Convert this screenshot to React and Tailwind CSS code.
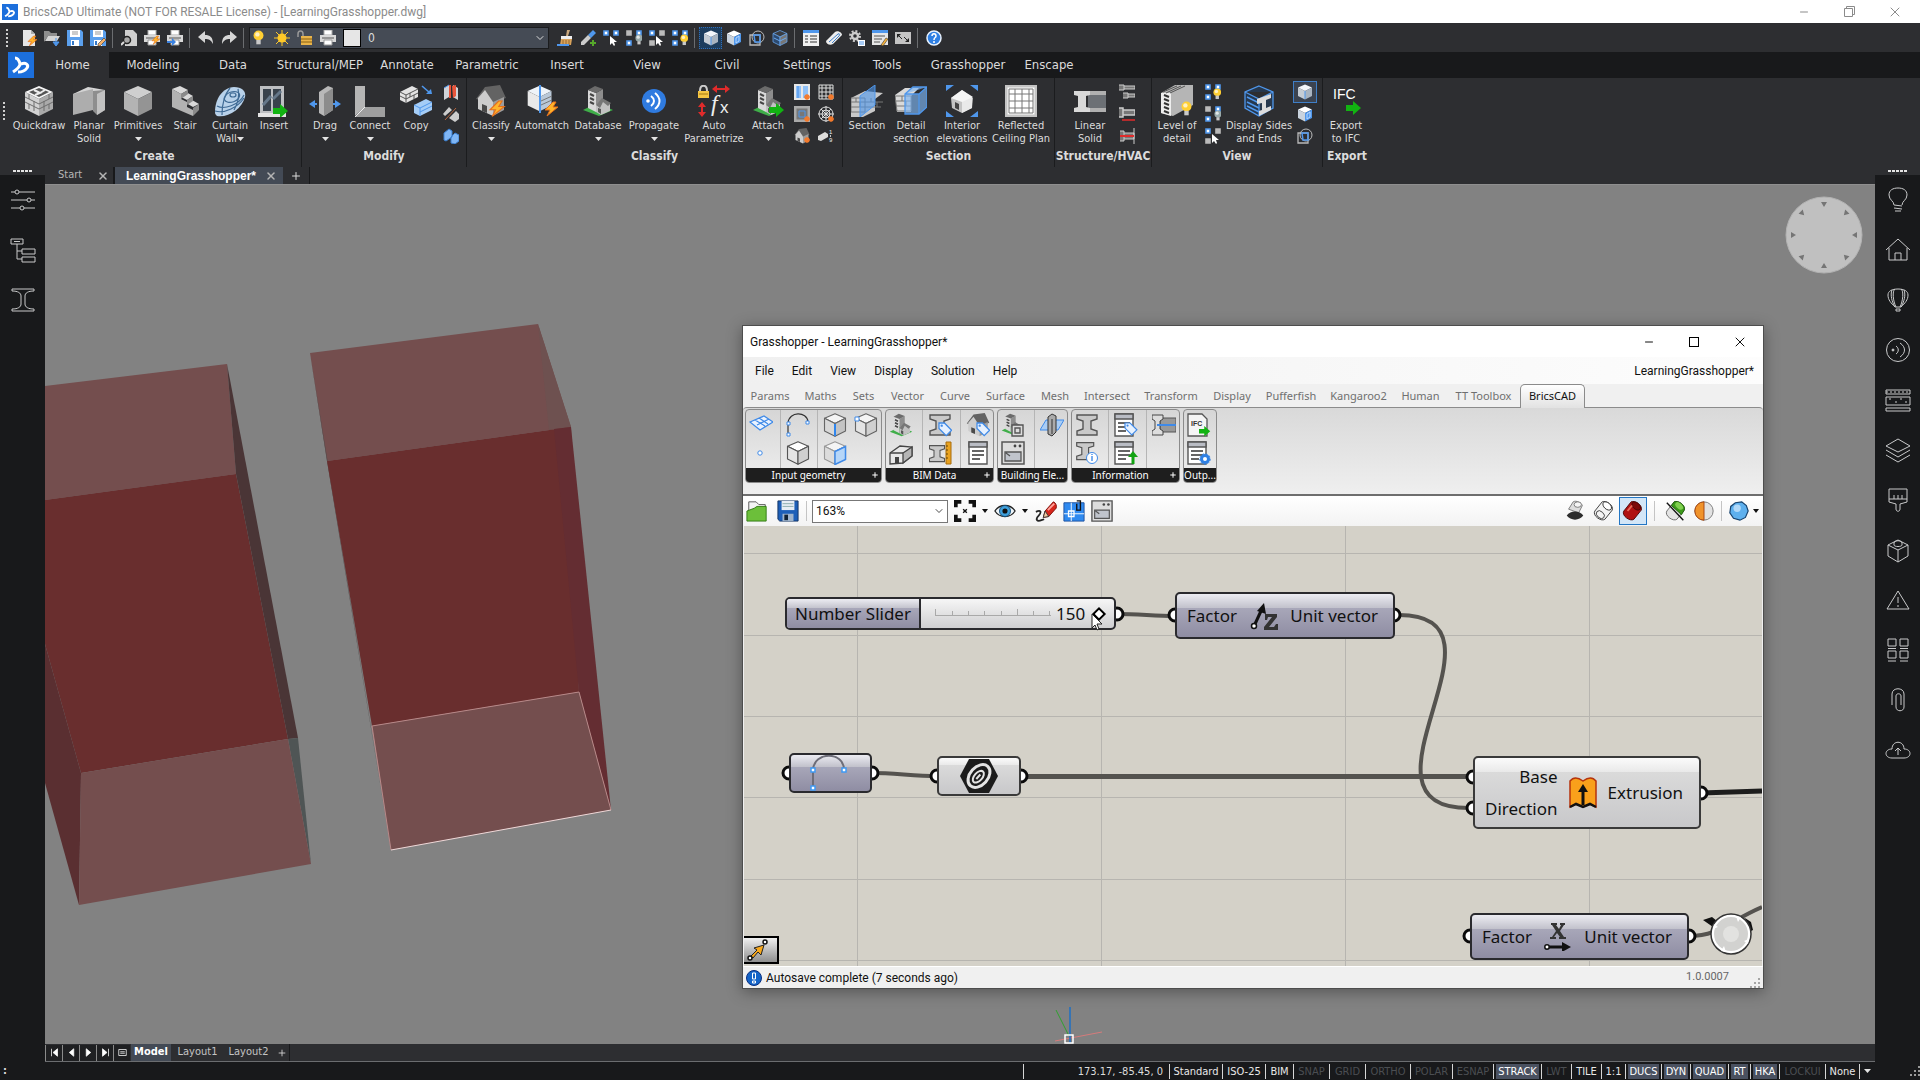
import { useState } from "react";
import { ChevronDown, X, Minus, Plus } from "lucide-react";

/* ---------- shared drawing parts ---------- */

const Svg = ({ box = 32, size = "size-8", children }) => (
  <svg
    viewBox={`0 0 ${box} ${box}`}
    className={`${size} shrink-0`}
    fill="none"
    aria-hidden="true"
  >
    {children}
  </svg>
);

const Arrow = ({ t }) => (
  <path transform={t} d="M0 4h7V0l8 7-8 7v-4H0z" fill="#12b312" />
);

const Bolt = ({ t }) => (
  <path transform={t} d="M8 0L0 8h5L2 14 13 5H8l3-5z" fill="#ffb52b" stroke="#e8701a" />
);

const Bulb = ({ t, c = "#ffcf33" }) => (
  <g transform={t}>
    <circle cx="5" cy="5" r="4.5" fill={c} />
    <circle cx="4" cy="4" r="2" fill="#fff" opacity=".7" />
    <path d="M3 9h4v4H3z" fill="#c9c9c9" />
  </g>
);

const Spark = ({ t }) => (
  <path
    transform={t}
    d="M3 0v6M0 3h6M1 1l4 4M5 1L1 5"
    stroke="#f47a2c"
    strokeWidth="1.4"
  />
);

const Cube = ({ t, top = "#cfcfcf", left = "#b3b3b3", right = "#949494", line }) => (
  <g transform={t} stroke={line} strokeWidth={line ? 1.5 : 0} strokeLinejoin="round">
    <path d="M16 1l14 6-14 7L2 7z" fill={top} />
    <path d="M2 7l14 7v17L2 24z" fill={left} />
    <path d="M30 7l-14 7v17l14-7z" fill={right} />
  </g>
);

const Building = ({ t }) => (
  <g transform={t}>
    <path d="M1 25l14-7 16 7-14 6z" fill="#3fae49" />
    <path d="M6 5l8 3v19l-8-4z" fill="#d9d9d9" />
    <path d="M14 8l7-4v20l-7 3z" fill="#8d8d8d" />
    <path d="M6 5l7-4 8 3-7 4z" fill="#6b6b6b" />
    <path d="M8 9l4 2M8 13l4 2M8 17l4 2" stroke="#444" strokeWidth="2" />
    <path d="M14 20l6-6 8 5v7l-9 4-5-3z" fill="#c2c2c2" />
    <path d="M14 20l6-7 9 5-3 3-5-4-3 6z" fill="#777" />
    <path d="M16 23l3 1v5l-3-2z" fill="#555" />
  </g>
);

const House = ({ t }) => (
  <g transform={t}>
    <path d="M21 2h5v9h-5z" fill="#b5b5b5" />
    <path d="M1 14L10 2l15-2 6 13-13 5z" fill="#636363" />
    <path d="M3 13l7-8 8 12v14L3 24z" fill="#cdcdcd" />
    <path d="M18 17l11-5v13l-11 6z" fill="#9d9d9d" />
    <path d="M7 19l5 2v7l-5-2z" fill="#4a4a4a" />
  </g>
);

const Beam = ({ t, fill = "#c9c9c9", line = "#555" }) => (
  <path
    transform={t}
    d="M2 2h20v4l-6 2v8l6 2v4H2v-4l6-2V8L2 6z"
    fill={fill}
    stroke={line}
    strokeWidth="1.4"
  />
);

const Tag = ({ t }) => (
  <g transform={t}>
    <path d="M0 0h6l8 8-6 6-8-8z" fill="#e6f1ff" stroke="#3f8ae8" strokeWidth="1.4" />
    <circle cx="3" cy="3" r="1.3" fill="#3f8ae8" />
  </g>
);

const Sheet = ({ t }) => (
  <g transform={t}>
    <path d="M1 1h18v22H1z" fill="#fff" stroke="#555" strokeWidth="1.4" />
    <path d="M1 1h18v5H1z" fill="#b9bcc4" stroke="#555" strokeWidth="1.4" />
    <path d="M4 10h12M4 14h12M4 18h8" stroke="#333" strokeWidth="1.4" />
  </g>
);

const Bricks = ({ t }) => (
  <path
    transform={t}
    d="M0 5l14 7 14-7M0 10l14 7 14-7M4 2v5M9 9v5M19 9v5M24 2v5M4 12v5M9 14v5M19 14v5M24 12v5"
    stroke="#6d6d6d"
  />
);

const Squares = ({ a = "#4f97ec", b = "#4f97ec", c = "#4f97ec", pair }) => (
  <g>
    <path d="M1 1h4v4H1z" fill={a === "#bbb" ? a : "#fff"} stroke={a} strokeWidth="1.6" />
    <path d="M11 1h4v4h-4z" fill={b === "#bbb" ? b : "#fff"} stroke={b} strokeWidth="1.6" />
    {!pair && (
      <path d="M1 11h4v4H1z" fill={c === "#bbb" ? c : "#fff"} stroke={c} strokeWidth="1.6" />
    )}
  </g>
);

const Pointer = ({ t }) => (
  <path transform={t} d="M0 0v9l2-2 2 3 1-1-1-3h3z" fill="#fff" />
);

const Logo = ({ size }) => (
  <Svg box={26} size={size}>
    <path d="M0 0h26v26H0z" fill="#1c6fdc" />
    <path
      d="M7 6c3 0 4 2 5 6 0 3-4 6-7 8M13 12c5-2 8 1 6 4-2 3-5 4-9 4"
      stroke="#fff"
      strokeWidth="3"
    />
  </Svg>
);

/* ---------- quick access icons (16px) ---------- */

const Floppy = () => (
  <g>
    <path d="M0 0h14l2 2v14H0z" fill="#5ba0ee" />
    <path d="M3 0h10v7H3z" fill="#fff" />
    <path d="M5 2h6M5 4h6" stroke="#999" />
    <path d="M4 10h8v6H4z" fill="#fff" />
    <path d="M5 11h2v4H5z" fill="#3478c8" />
  </g>
);

const Printer = () => (
  <g>
    <path d="M4 0h8v5H4z" fill="#fff" stroke="#aaa" />
    <path d="M0 5h16v7H0z" fill="#d8d8d8" />
    <path d="M2 8h12" stroke="#555" />
    <path d="M4 10h8v5H4z" fill="#fff" stroke="#999" />
  </g>
);

const quick = {
  new: <><path d="M2 0h8l4 4v12H2z" fill="#e6e6e6" /><path d="M10 0v4h4" fill="#aaa" /><Bolt t="translate(7 6) scale(.7)" /></>,
  open: <><path d="M0 1h5l2 2h6v3H4L0 12z" fill="#8e8e8e" /><path d="M4 6h12l-3 5H1z" fill="#d5d5d5" /><path d="M12 8v6M9 12l3 4 3-4z" stroke="#4f97ec" fill="#4f97ec" /></>,
  save: <Floppy />,
  saveAs: <><Floppy /><path d="M8 14l6-6 2 2-6 6H8z" fill="#f6b26b" stroke="#333" strokeWidth=".6" /></>,
  preview: <><path d="M4 0h8l4 4v12H4z" fill="#cfcfcf" /><circle cx="6" cy="10" r="3.5" stroke="#222" fill="#aaa" strokeWidth="1.5" /><path d="M3 12l-3 3" stroke="#ddd" strokeWidth="2" /></>,
  print: <><Printer /><Bolt t="translate(8 6) scale(.6)" /></>,
  plot: <><Printer /><path d="M0 11h5V8l4 4-4 4v-3H0z" fill="#3b82e0" /></>,
  undo: <path d="M0 7l7-6v4c5 0 8 2 8 9-2-4-4-5-8-5v4z" fill="#d6d6d6" />,
  redo: <path d="M16 7L9 1v4c-5 0-8 2-8 9 2-4 4-5 8-5v4z" fill="#d6d6d6" />,
  brush: <><path d="M10 0h3l-2 6H9z" fill="#c9a77d" /><path d="M4 6h11v3H4z" fill="#eee" /><path d="M4 9h11l-1 6H3z" fill="#d9a35c" /><path d="M6 10v5M9 10v5M12 10v5" stroke="#9a6a2c" /><path d="M0 15h12" stroke="#4f97ec" strokeWidth="2" /></>,
  dropper: <><path d="M13 0l3 3-5 5-3-3z" fill="#4f97ec" /><path d="M8 5l3 3-7 7H1v-3z" fill="#ccc" /><path d="M13 10v6M10 13h6" stroke="#56a82b" strokeWidth="2" /></>,
  pick: <><Squares pair /><Pointer t="translate(7 6)" /></>,
  hide: <><Squares a="#bbb" b="#4f97ec" /><Bulb t="translate(9 4) scale(.8)" c="#9aa" /></>,
  isolate: <><Squares b="#bbb" c="#bbb" /><Pointer t="translate(7 6)" /></>,
  show: <><Squares /><Bulb t="translate(8 4) scale(.85)" /></>,
  edges: <><Cube t="scale(.5)" top="#f3f6fa" left="#c5ccd4" right="#a9b4c0" /><path d="M8 7v8" stroke="#4f97ec" /></>,
  faces: <><Cube t="scale(.5)" top="#fff" left="#c9d3de" right="#4f97ec" /><path d="M10 8l3-2v5l-3 2z" stroke="#b8d8ff" /></>,
  bounds: <><path d="M1 5h10v10H1z" stroke="#bbb" strokeWidth="1.3" /><circle cx="9" cy="7" r="6" stroke="#bbb" /><path d="M5 5h6v7H6z" stroke="#4f97ec" strokeWidth="1.5" /></>,
  solid: <><Cube t="scale(.5)" top="#3b3e43" left="#2c4a70" right="#777" line="#6aaaf2" /><path d="M2 8l6 3 6-3" stroke="#6aaaf2" /></>,
  props: <><path d="M0 0h16v16H0z" fill="#f0f0f0" /><path d="M0 0h16v3H0z" fill="#4f97ec" /><path d="M2 6h3M2 9h3M2 12h3M7 6h7M7 9h7M7 12h7" stroke="#333" /></>,
  eraser: <><path d="M0 11L9 2c2-2 7 0 7 3l-9 9c-3 2-7 0-7-3z" fill="#eee" /><path d="M3 12l9-8c2-1 2 1 1 2l-7 7" stroke="#3f7fc8" /></>,
  gears: <><circle cx="6" cy="6" r="5" stroke="#ccc" strokeWidth="2" strokeDasharray="2 1.9" /><circle cx="6" cy="6" r="3" stroke="#ccc" strokeWidth="2.4" /><path d="M9 10h7v6H9z" fill="#fff" /><path d="M10 12h5M10 14h5" stroke="#4f97ec" /></>,
  note: <><path d="M0 0h16v15H0z" fill="#e6e6e6" /><path d="M0 0h16v3H0z" fill="#4f97ec" /><path d="M2 6h11M2 9h8M2 12h6" stroke="#555" /><path d="M9 15l5-7 2 1-5 7z" fill="#f6b23b" stroke="#333" strokeWidth=".6" /></>,
  expand: <><path d="M0 2h16v12H0z" fill="#c4c4c4" /><path d="M2 4h4L2 8zM14 12h-4l4-4z" fill="#222" /><path d="M3 5l4 4M13 11L9 7" stroke="#222" /></>,
  help: <><circle cx="8" cy="8" r="7" fill="#2f80e4" stroke="#e8f2ff" strokeWidth="1.5" /><path d="M6 6c0-3 4-3 4 0 0 2-2 1-2 4M8 11v2" stroke="#fff" strokeWidth="1.5" /></>,
};

const QuickButton = ({ name }) => (
  <button
    aria-label={name}
    className={`flex h-[22px] w-[23px] items-center justify-center ${
      name === "edges" ? "border border-dotted border-[#2f6fb8] bg-[#1d3d5e]" : ""
    }`}
  >
    <Svg box={16} size="size-4">{quick[name]}</Svg>
  </button>
);

const QuickSep = () => <span className="mr-1 ml-[3px] h-5 w-px bg-[#6b6d70]" />;

/* ---------- ribbon ---------- */

const big = {
  quickdraw: <><Cube top="#f5f5f5" left="#d2d2d2" right="#aaa" /><path d="M16 3l10 4-10 5L6 7z" fill="#555" /><path d="M11 5l6 3-5 2M17 8l5-3" stroke="#eee" strokeWidth="2" /><Bricks t="translate(2 7)" /></>,
  planar: <><path d="M0 9l15-7 17 3-9 5z" fill="#d5d5d5" /><path d="M0 9l20-5v21L0 30z" fill="#adadad" /><path d="M20 6l12-1v20l-8 5-4-4z" fill="#8e8e8e" /><path d="M24 9l8-4v20l-8 5z" fill="#c2c2c2" /></>,
  primitives: <Cube />,
  stair: <><path d="M3 4l8-3 8 4-7 4zM10 11l7-4 7 4-6 4zM17 18l6-3 7 4-6 3z" fill="#d9d9d9" /><path d="M3 4l9 5v5l6 3v5l6 3v6L3 22z" fill="#b2b2b2" /><path d="M12 9l7-4v4l-7 5zM18 15l6-4v5l-6 4zM24 23l6-4v6l-6 6z" fill="#8a8a8a" /></>,
  curtain: <><path d="M1 27C1 14 8 3 20 2c9 0 12 5 11 10C28 24 14 33 3 31c-1-1-2-2-2-4z" fill="#b9d2ea" /><g stroke="#3f6a94" strokeWidth="1.2"><ellipse cx="19" cy="10" rx="3" ry="2" /><ellipse cx="18" cy="12" rx="8" ry="5" transform="rotate(-20 18 12)" /><path d="M3 21c7 4 22-1 27-11M1 26c10 3 23-4 29-13M16 3c-5 6-8 16-8 27M24 4c2 8 0 14-4 21" /></g></>,
  insert: <><path d="M2 1h24v28H2z" fill="#bdbfc2" /><path d="M5 4h8v22H5zM15 4h8v22h-8z" fill="#39424c" /><path d="M5 20l8-9M15 14l8-8" stroke="#657789" strokeWidth="3" /><path d="M0 28h28v4H0z" fill="#e3e3e3" /><Arrow t="translate(15 19)" /></>,
  drag: <><path d="M10 7l9-6 5 2v22l-9 6-5-3z" fill="#b8b8b8" /><path d="M15 9l9-6v22l-9 6z" fill="#8c8c8c" /><path d="M8 19H3M24 19h5" stroke="#4f97ec" strokeWidth="2" /><path d="M0 19l6-4v8zM32 19l-6-4v8z" fill="#4f97ec" /></>,
  connect: <><path d="M1 1h10v21L1 31z" fill="#b5b5b5" /><path d="M11 22h20v10H1z" fill="#9f9f9f" /><path d="M11 22L1 32" stroke="#eee" /></>,
  copy: <><g transform="translate(0 1)"><path d="M0 6l12-6 6 3v8L6 17l-6-3z" fill="#e3e3e3" /><path d="M0 6l6 3 12-6M6 9v8M0 10l6 3 12-6M10 7v4M14 9v4" stroke="#555" /></g><g transform="translate(14 14)"><path d="M0 6l12-6 6 3v8L6 17l-6-3z" fill="#a5cdf7" /><path d="M0 6l6 3 12-6M6 9v8M6 13l12-6" stroke="#4f97ec" /></g><path d="M22 1l8 7" stroke="#4f97ec" strokeWidth="1.6" /><path d="M32 9h-6l5-5z" fill="#4f97ec" /></>,
  classify: <><House /><Bolt t="translate(15 16) scale(1.1)" /></>,
  automatch: <><Cube t="scale(.85)" top="#eef3f8" left="#e9e9e9" right="#b9c8d8" /><path d="M14 12v15M15 16l11-5M15 20l11-5" stroke="#777" /><path d="M14 0v28" stroke="#4f97ec" strokeWidth="2" /><Bolt t="translate(19 17)" /></>,
  database: <Building />,
  propagate: <><circle cx="16" cy="16" r="12" fill="#2f7be0" /><circle cx="10" cy="16" r="1.8" fill="#fff" /><path d="M13 11c4 3 4 7 0 10M17 8c6 5 6 11 0 16" stroke="#fff" strokeWidth="2" /></>,
  autoparam: <><path d="M2 6c0-7 7-7 7 0v2" stroke="#ccc" strokeWidth="2" /><path d="M0 6h11v7H0z" fill="#f5c542" /><path d="M1 9h9" stroke="#a57a14" /><path d="M18 4h10" stroke="#e02b2b" strokeWidth="2" /><path d="M14 4l5-4v8zM32 4l-5-4v8z" fill="#e02b2b" /><path d="M4 17l4 5H0zM4 32l4-5H0z" fill="#e02b2b" /><path d="M4 20v9" stroke="#e02b2b" strokeWidth="2" /><text x="13" y="26" fill="#eee" fontFamily="Liberation Serif" fontStyle="italic" fontSize="24">f</text><text x="22" y="28" fill="#eee" fontFamily="Liberation Sans" fontSize="17">x</text></>,
  attach: <><Building /><Arrow t="translate(17 18)" /></>,
  section: <><path d="M0 13l14-7 18 2-8 6v12l-12 6H0z" fill="#c9c9c9" /><path d="M0 13h14v14H0zM0 17h32M0 22h30M5 13v4M9 17v5M20 13v4M26 17v5" stroke="#777" /><path d="M9 11L24 0v20L9 32z" fill="#4f97ec" fillOpacity=".6" stroke="#4f97ec" /></>,
  detail: <><path d="M0 10l10-7h14l-8 8v16H2z" fill="#d9d9d9" /><path d="M0 11h16v15H2zM1 16h15M1 21h15M7 11v5M11 16v5" stroke="#777" /><path d="M10 9l8-7h14v20l-8 7H10zM10 9h14l8-7M24 9v20" fill="#7eb6f3" fillOpacity=".65" stroke="#4f97ec" strokeWidth="1.3" /></>,
  interior: <><path d="M0 0h8L0 6zM32 0h-8l8 6zM0 32h8l-8-6zM32 32h-8l8-6z" fill="#4f97ec" /><path d="M5 13l11-8 11 8-1 10-10 5-10-5z" fill="#c4c4c4" /><path d="M16 16l10-4v11l-10 5z" fill="#e9e9e9" /><path d="M5 13l11-8 11 7-11 5z" fill="#f5f5f5" /><path d="M9 17l4 2v6l-4-2z" fill="#444" /></>,
  reflected: <><path d="M1 1h30v30H1z" fill="#fff" stroke="#c4c4c4" strokeWidth="3" /><path d="M4 4h24v24H4zM10 4v24M17 4v24M24 4v24M4 9h24M4 16h24M4 23h24" stroke="#777" /></>,
  linear: <><path d="M14 8h18v17H14z" fill="#6c7075" /><path d="M14 8h18M14 25h18" stroke="#b0b0b0" strokeWidth="4" /><path d="M0 6h16v4l-4 1v11l4 1v4H0v-4l4-1V11l-4-1z" fill="#d9d9d9" /></>,
  level: <><path d="M0 8L14 0h18v20L12 31 0 28z" fill="#b5b5b5" /><path d="M0 8h10v23L0 28z" fill="#eee" /><path d="M3 10l5 2M3 14l5 2M3 18l5 2M3 22l5 2M3 26l5 2" stroke="#333" strokeWidth="2" /><path d="M2 7L16 1M5 8l15-7M9 8l15-7" stroke="#555" /><Bulb t="translate(20 16) scale(1.1)" /></>,
  display: <><path d="M16 1l14 6v16l-14 8-14-8V7zM2 7l14 7 14-7M16 14v17" fill="#26384e" stroke="#4f97ec" strokeWidth="1.3" /><path d="M4 12l12 6M4 17l12 6M4 21l12 6" stroke="#4f97ec" strokeWidth="1.5" /><path d="M14 14l14-5v4l-5 2v8l5-2v4l-12 6v-5l3-1v-7l-5 1z" fill="#ddd" /></>,
  ifc: <><text x="3" y="14" fill="#fff" fontFamily="Liberation Sans" fontSize="14">IFC</text><Arrow t="translate(16 16)" /></>,
};

const small = {
  panels: <><path d="M1 4l5-3v12l-5 3zM10 1l5 3v12l-5-3z" fill="#cfd3d8" /><path d="M6 1h2v13H6zM9 2l4-1v11l-3 2z" fill="#e9553b" /><path d="M1 4l5-3" stroke="#4f97ec" /></>,
  split: <><path d="M0 8l6-7 3 3-7 6zM6 12l7-7 3 3v5l-4 3z" fill="#ccc" /><path d="M2 14L13 2" stroke="#b5643c" /></>,
  join: <path d="M1 5l5-4 3 2v6l-6 4-2-1zM8 9l4-4 4 2v6l-4 3-4-1z" fill="#7fb6f5" stroke="#3b7fd0" />,
  win: <><path d="M1 1h14v14H1z" fill="#8fc0f7" stroke="#e8e8e8" strokeWidth="2" /><path d="M8 1v14" stroke="#e8e8e8" strokeWidth="2" /><path d="M4 2v12" stroke="#3f8ae8" /><Spark t="translate(10 10)" /></>,
  grid: <><path d="M1 1h14v14H1zM1 4h14M1 8h14M1 12h14M4 1v14M8 1v14M12 1v14" stroke="#ddd" /><Spark t="translate(10 10)" /></>,
  frame: <><path d="M1 1h14v14H1z" fill="#777" stroke="#aaa" strokeWidth="3" /><path d="M5 5h6v6H5z" stroke="#4f97ec" /><Spark t="translate(10 10)" /></>,
  radial: <><circle cx="8" cy="8" r="7" stroke="#ddd" /><circle cx="8" cy="8" r="4" stroke="#ddd" /><path d="M8 0v16M0 8h16M3 3l10 10M13 3L3 13" stroke="#ddd" /><Spark t="translate(10 10)" /></>,
  room: <><House t="scale(.5)" /><Spark t="translate(10 9)" /></>,
  number: <><path d="M0 8l7-4 3 2v3l-7 4-3-1z" fill="#ddd" /><text x="11" y="6" fill="#eee" fontFamily="Liberation Sans" fontSize="6">1</text><text x="11" y="14" fill="#eee" fontFamily="Liberation Sans" fontSize="6">9</text><path d="M12.500 7v2" stroke="#eee" strokeWidth=".8" /></>,
  beam1: <path d="M0 1h5v5H0M5 2h11v3H5M4 9h5v5H4M9 10h7v3H9" fill="#777" stroke="#ccc" />,
  beam2: <><path d="M0 2h4v9H0M4 4h12v5H4" fill="#777" stroke="#ccc" strokeWidth="1.5" /><path d="M3 14h13" stroke="#e02b2b" strokeWidth="1.5" /></>,
  beam3: <><path d="M1 3h4v10H1M5 5h10v6H5M15 0v16" fill="#777" stroke="#ccc" /><path d="M1 8h14" stroke="#e02b2b" strokeWidth="2" /></>,
  lodOn: quick.show,
  lodOff: quick.hide,
  lodPick: quick.isolate,
  edges2: quick.edges,
  faces: quick.faces,
  bounds: quick.bounds,
};

// big buttons are [icon, line 1, line 2, width]; { col } is a column of small icons
const groups = [
  {
    title: "Create",
    width: "w-[302px]",
    row: "pl-[3px]",
    grip: true,
    items: [
      ["quickdraw", "Quickdraw", "", "w-[52px]"],
      ["planar", "Planar", "Solid", "w-[48px]"],
      ["primitives", "Primitives", "▾", "w-[50px]"],
      ["stair", "Stair", "", "w-[44px]"],
      ["curtain", "Curtain", "Wall▾", "w-[46px]"],
      ["insert", "Insert", "", "w-[42px]"],
    ],
  },
  {
    title: "Modify",
    width: "w-[165px]",
    row: "pl-px",
    items: [
      ["drag", "Drag", "▾", "w-[44px]"],
      ["connect", "Connect", "▾", "w-[46px]"],
      ["copy", "Copy", "", "w-[46px]"],
      { col: ["panels", "split", "join"] },
    ],
  },
  {
    title: "Classify",
    width: "w-[376px]",
    row: "pl-px",
    items: [
      ["classify", "Classify", "▾", "w-[46px]"],
      ["automatch", "Automatch", "", "w-[56px]"],
      ["database", "Database", "▾", "w-[56px]"],
      ["propagate", "Propagate", "▾", "w-[56px]"],
      ["autoparam", "Auto", "Parametrize", "w-[64px]"],
      ["attach", "Attach", "▾", "w-[44px]"],
      { col: ["win", "frame", "room"] },
      { col: ["grid", "radial", "number"] },
    ],
  },
  {
    title: "Section",
    width: "w-[212px]",
    row: "pl-px",
    items: [
      ["section", "Section", "", "w-[46px]"],
      ["detail", "Detail", "section", "w-[42px]"],
      ["interior", "Interior", "elevations", "w-[60px]"],
      ["reflected", "Reflected", "Ceiling Plan", "w-[58px]"],
    ],
  },
  {
    title: "Structure/HVAC",
    width: "w-[97px]",
    row: "pl-[10px]",
    items: [
      ["linear", "Linear", "Solid", "w-[50px]"],
      { col: ["beam1", "beam2", "beam3"] },
    ],
  },
  {
    title: "View",
    width: "w-[171px]",
    row: "pl-px",
    items: [
      ["level", "Level of", "detail", "w-[48px]"],
      { col: ["lodOn", "lodOff", "lodPick"] },
      ["display", "Display Sides", "and Ends", "w-[68px]"],
      { col: ["edges2", "faces", "bounds"] },
    ],
  },
  {
    title: "Export",
    width: "w-[48px]",
    row: "pl-0",
    last: true,
    items: [["ifc", "Export", "to IFC", "w-[46px]"]],
  },
];

const Caret = () => (
  <svg viewBox="0 0 7 4" className="inline h-1 w-[7px]" aria-hidden="true">
    <path d="M0 0h7L3.500 4z" fill="#e4e4e4" />
  </svg>
);

function RibbonButton({ icon, top, bottom, width }) {
  return (
    <button className={`flex shrink-0 flex-col items-center pt-[7px] ${width}`}>
      <Svg>{big[icon]}</Svg>
      <span className="mt-[2px] text-[11px] leading-[13px] whitespace-nowrap">{top}</span>
      <span className="flex h-[13px] items-center text-[11px] leading-[13px] whitespace-nowrap">
        {bottom.replace("▾", "")}
        {bottom.includes("▾") && <Caret />}
      </span>
    </button>
  );
}

function RibbonGroup({ group }) {
  return (
    <section
      className={`flex h-[89px] shrink-0 flex-col ${
        group.last ? "" : "border-r border-[#1b1c1e]"
      } ${group.width}`}
    >
      <div className={`flex h-[71px] ${group.row}`}>
        {group.grip && (
          <span className="mt-6 mr-[7px] h-[18px] w-[3px] border-l-2 border-dotted border-[#cfcfcf]" />
        )}
        {group.items.map((item, i) =>
          item.col ? (
            <div key={i} className="flex w-6 flex-col pt-[3px]">
              {item.col.map((s) => (
                <button
                  key={s}
                  aria-label={s}
                  className={`flex h-[22px] w-6 items-center justify-center ${
                    s === "edges2" ? "border border-[#3f7fc8] bg-[#3b4350]" : ""
                  }`}
                >
                  <Svg box={16} size="size-4">{small[s]}</Svg>
                </button>
              ))}
            </div>
          ) : (
            <RibbonButton key={i} icon={item[0]} top={item[1]} bottom={item[2]} width={item[3]} />
          )
        )}
      </div>
      <h2 className={`text-center text-[12px] leading-[14px] font-bold ${group.grip ? "pl-2" : ""}`}>
        {group.title}
      </h2>
    </section>
  );
}

const menuTabs = [
  ["Modeling", "w-20"],
  ["Data", "w-20"],
  ["Structural/MEP", "w-[94px]"],
  ["Annotate", "w-20"],
  ["Parametric", "w-20"],
  ["Insert", "w-20"],
  ["View", "w-20"],
  ["Civil", "w-20"],
  ["Settings", "w-20"],
  ["Tools", "w-20"],
  ["Grasshopper", "w-[82px]"],
  ["Enscape", "w-20"],
];

/* ---------- side bars ---------- */

const side = {
  settings: <><path d="M0 4h4M8 4h16M0 12h16M20 12h4M0 20h9M13 20h11" /><circle cx="6" cy="4" r="2" /><circle cx="18" cy="12" r="2" /><circle cx="11" cy="20" r="2" /></>,
  structure: <path d="M0 1h12v5H0zM11 11h13v5H11zM11 19h13v5H11zM3 3.500h6M6 6v15h5M6 13h5" />,
  profile: <path d="M1 1h22v2c-6 0-9 2-9 5v8c0 3 3 5 9 5v2H1v-2c6 0 9-2 9-5V8c0-3-3-5-9-5z" />,
  tips: <path d="M8 17c0-4-5-5-5-10C3 2 7 0 12 0s9 2 9 7c0 5-5 6-5 10M8 17l8 1M8 20l8 1M9 23h6" />,
  home: <path d="M0 12L12 1l12 11M3 10v12h18V10M9 22v-7h6v7" />,
  balloon: <path d="M9 19C5 15 2 12 2 7c0-4 4-6 10-6s10 2 10 6c0 5-3 8-7 12zM10 19C7 13 6 3 9 1M14 19c3-6 4-16 1-18M9 19C6 14 4 7 6 2M15 19c3-5 5-12 3-17M10 21h4v2h-4z" />,
  propagate: <><circle cx="12" cy="12" r="11.5" /><circle cx="7" cy="12" r="1" fill="#c9cacb" /><path d="M10 8c3 2 3 6 0 8M14 5c6 4 6 10 0 14" /></>,
  materials: <><path d="M0 2h24v4H0zM0 9h24v8H0zM0 20h24v3H0z" /><path d="M0 4h24M3 11h2M9 14h2M14 11h2M19 14h2" strokeDasharray="2 2" /></>,
  layers: <path d="M0 8l12-7 12 7-12 6zM0 12l12 7 12-7M0 17l12 7 12-7" />,
  paint: <path d="M3 1h18v13l-7 2v5c0 3-4 3-4 0v-5l-7-2zM3 11h18M8 11V7M12 11V7M16 11V7" />,
  component: <path d="M2 7l10-5 10 5v11l-10 6-10-6zM2 7l10 5 10-5M12 12v12M8 5c0-3 8-3 8 0v2c0 2-8 2-8 0z" />,
  warning: <path d="M12 3l11 18H1zM12 9v6M12 17v2" />,
  blocks: <path d="M2 1h8v7H2zM14 1h8v7h-8zM2 10.500h8M14 10.500h8M2 13h8v7H2zM14 13h8v7h-8zM2 23h8M14 23h8" />,
  clip: <path d="M6 17V6c0-7 12-7 12 0v13c0 5-8 5-8 0V8c0-3 5-3 5 0v9" />,
  cloud: <path d="M6 20c-8 0-8-9 0-9 0-9 12-9 12 0 8 0 8 9 0 9zM12 17v-6M9 13l3-3 3 3" />,
};

function SideBar({ names }) {
  return (
    <aside className="flex w-[45px] shrink-0 flex-col bg-[#18191b]">
      <div className="flex h-2 items-center justify-center gap-px bg-[#2d2e31]">
        {[0, 1, 2, 3, 4].map((n) => (
          <i key={n} className="h-[2px] w-[3px] bg-[#e4e4e4]" />
        ))}
      </div>
      {names.map((name) => (
        <button key={name} aria-label={name} className="flex h-[50px] items-center justify-center">
          <svg viewBox="-1 -1 26 26" className="size-[26px]" fill="none" stroke="#c9cacb" aria-hidden="true">
            {side[name]}
          </svg>
        </button>
      ))}
    </aside>
  );
}

/* ---------- model view ---------- */

function ModelView() {
  return (
    <svg className="absolute inset-0 h-full w-full" aria-hidden="true">
      <g transform="translate(-45 -185)">
        {/* left solid */}
        <path d="M45 386L227 364 236 474 45 500z" fill="#744e4e" />
        <path d="M45 500L236 474 288 739 81 773 45 644z" fill="#692e2e" />
        <path d="M45 644L81 773 79 905 45 783z" fill="#5a2f31" />
        <path d="M227 364L298 738 288 739 236 474z" fill="#4a3536" />
        <path d="M288 739L298 738 311 864z" fill="#4f5555" />
        <path d="M81 773L288 739 311 864 79 905z" fill="#744e4e" />
        {/* right solid */}
        <path d="M310 353L538 324 571 427 327 461z" fill="#744e4e" />
        <path d="M538 324L571 427 549 430z" fill="#6e5150" />
        <path d="M310 353L327 461 391 850z" fill="#4f4a4a" />
        <path d="M327 461L571 427 579 692 372 726z" fill="#692e2e" />
        <path d="M554 429L571 427 611 810 579 692z" fill="#642d32" />
        <path d="M372 726L579 692 611 810 391 850z" fill="#744e4e" />
        <path d="M611 810L579 692 372 726 391 850" stroke="#b88888" fill="none" />
        <path d="M391 850L611 810" stroke="#f0d8d8" />
        {/* ucs */}
        <path d="M1055 1041L1102 1032" stroke="#d67b7b" />
        <path d="M1056 1010L1069 1036" stroke="#2fa02f" />
        <path d="M1070 1007v36" stroke="#1c6fc4" strokeWidth="1.5" />
        <path d="M1065 1035h8v8h-8z" stroke="#fff" strokeWidth="1.5" fill="none" />
      </g>
    </svg>
  );
}

const LookFrom = () => (
  <svg viewBox="-40 -40 80 80" className="absolute top-[10px] right-[11px] size-20" aria-hidden="true">
    <circle r="38" fill="#c0c0c0" stroke="#b2b2b2" />
    {[0, 45, 90, 135, 180, 225, 270, 315].map((a) => (
      <path key={a} d="M-3 -33h6l-3 5z" fill="#757575" transform={`rotate(${a})`} />
    ))}
  </svg>
);

/* ---------- grasshopper window ---------- */

const ghTabs = [
  ["Params", "w-[54px]"],
  ["Maths", "w-[47px]"],
  ["Sets", "w-[39px]"],
  ["Vector", "w-[49px]"],
  ["Curve", "w-[46px]"],
  ["Surface", "w-[55px]"],
  ["Mesh", "w-[44px]"],
  ["Intersect", "w-[60px]"],
  ["Transform", "w-[68px]"],
  ["Display", "w-[54px]"],
  ["Pufferfish", "w-[64px]"],
  ["Kangaroo2", "w-[71px]"],
  ["Human", "w-[53px]"],
  ["TT Toolbox", "w-[73px]"],
];

const gh = {
  surface: <path d="M1 9l14-6 9 6-13 8zM6 7l10 6M10 5l9 6M8 12l12-6" fill="#eaf3ff" stroke="#3f8ae8" strokeWidth="1.2" />,
  point: <circle cx="11" cy="12" r="2.2" fill="#fff" stroke="#3f8ae8" />,
  curve: <><path d="M2 23V10C3-2 21-2 22 9" stroke="#333" strokeWidth="1.2" /><path d="M1 9h3v3H1zM20 8h3v3h-3zM1 20h3v3H1z" fill="#fff" stroke="#3f8ae8" /></>,
  cube: <Cube t="scale(.75)" top="#fff" left="#e4e4e4" right="#cfcfcf" line="#555" />,
  edge: <><Cube t="scale(.75)" top="#f4f4f4" left="#d8d8d8" right="#c4c4c4" line="#666" /><path d="M12 11v12" stroke="#2f86ee" strokeWidth="2" /></>,
  vertex: <><Cube t="scale(.75)" top="#f4f4f4" left="#e4e4e4" right="#d0d0d0" line="#666" /><path d="M1 4h4v4H1z" fill="#fff" stroke="#3f8ae8" /></>,
  face: <><Cube t="scale(.75)" top="#f4f4f4" left="#dcdcdc" right="#c4dcf5" line="#999" /><path d="M12 10.500l10.500-5v13L12 23.500z" fill="#b6d6f8" stroke="#3f8ae8" strokeWidth="1.5" /></>,
  building: <Building t="scale(.75)" />,
  beamTag: <><Beam /><Tag t="translate(11 10) scale(.9)" /></>,
  houseTag: <><House t="scale(.75)" /><Tag t="translate(11 10) scale(.9)" /></>,
  room: <><path d="M1 12l10-7 12 1v9l-9 7-13 1z" fill="#e8e8e8" stroke="#444" strokeWidth="1.3" /><path d="M14 12l9-6v9l-9 7z" fill="#b5b5b5" stroke="#444" strokeWidth="1.3" /><path d="M1 12h13" stroke="#444" strokeWidth="1.3" /><path d="M6 16h4v6H6z" fill="#444" /></>,
  beamRule: <><Beam t="translate(0 3) scale(.75 .8)" /><path d="M18 1h5v22h-5z" fill="#e9a21f" stroke="#a86c0c" /><path d="M18 5h2M18 9h2M18 13h2M18 17h2" stroke="#6b4606" /></>,
  sheet: <Sheet t="translate(2 0)" />,
  buildingDb: <><Building t="scale(.7)" /><path d="M11 12h11v11H11zM14 15h5v5h-5z" fill="#ddd" stroke="#555" strokeWidth="1.4" /></>,
  cut: <><path d="M0 17L6 7h18l-6 10z" fill="#a9cdf5" stroke="#3f8ae8" /><path d="M8 4l4-3 4 2v16l-4 4-4-2z" fill="#aaa" stroke="#333" /><path d="M12 6v15" stroke="#333" /></>,
  toaster: <><path d="M1 1h22v22H1z" fill="#ddd" stroke="#555" strokeWidth="1.5" /><path d="M4 11h16v9H4zM5 12l4 3" fill="#c0c4cc" stroke="#555" strokeWidth="1.3" /><circle cx="14" cy="5" r="1.4" fill="#444" /><circle cx="19" cy="5" r="1.4" fill="#444" /></>,
  beam: <Beam />,
  beamInfo: <><Beam t="scale(.85)" /><circle cx="17" cy="17" r="5.5" fill="#fff" stroke="#3f8ae8" /><path d="M17 15v5M17 13v1" stroke="#3f8ae8" strokeWidth="1.4" /></>,
  sheetTag: <><Sheet /><Tag t="translate(11 10) scale(.85)" /></>,
  sheetUp: <><Sheet /><path d="M19 23v-8" stroke="#12a312" strokeWidth="3" /><path d="M14 16l5-6 5 6z" fill="#12a312" /></>,
  beamLine: <><path d="M8 5h16v14H8z" fill="#999" stroke="#555" /><path d="M0 2h11v4l-3 2v8l3 2v4H0v-4l3-2V8L0 6z" fill="#ddd" stroke="#444" /><path d="M5 12h19" stroke="#3f8ae8" strokeWidth="2" /></>,
  ifc: <><path d="M1 1h14l5 5v17H1z" fill="#f5f5f5" stroke="#555" strokeWidth="1.3" /><text x="4" y="13" fontSize="7" fontWeight="bold" fontFamily="Liberation Sans" fill="#333">IFC</text><Arrow t="translate(12 13) scale(.75)" /></>,
  sheetGear: <><Sheet /><circle cx="18" cy="18" r="3.5" stroke="#2f80e4" strokeWidth="3" fill="#fff" /><circle cx="18" cy="18" r="5.2" stroke="#2f80e4" strokeDasharray="2 1.5" /></>,
};

// columns of two icons, null leaves the slot empty
const ghPanels = [
  { title: "Input geometry", width: "w-[137px]", more: true, cols: [["surface", "point"], ["curve", "cube"], ["edge", "face"], ["vertex", null]] },
  { title: "BIM Data", width: "w-[109px]", more: true, cols: [["building", "room"], ["beamTag", "beamRule"], ["houseTag", "sheet"]] },
  { title: "Building Ele...", width: "w-[71px]", cols: [["buildingDb", "toaster"], ["cut", null]] },
  { title: "Information", width: "w-[109px]", more: true, cols: [["beam", "beamInfo"], ["sheetTag", "sheetUp"], ["beamLine", null]] },
  { title: "Outp...", width: "w-[34px]", cols: [["ifc", "sheetGear"]] },
];

function GhPanel({ panel }) {
  return (
    <section
      className={`flex h-[74px] shrink-0 flex-col overflow-hidden rounded-[4px] border border-[#8b8b8b] bg-linear-to-b from-[#d6d6d6] to-[#efefef] ${panel.width}`}
    >
      <div className="flex flex-1 justify-between px-[3px]">
        {panel.cols.map((col, i) => (
          <div
            key={i}
            className={`flex flex-col gap-1 pt-[3px] ${
              i > 0 && i < 3 ? "border-l border-[#b5b5b5] pl-[5px]" : ""
            }`}
          >
            {col.map((name, j) =>
              name ? (
                <button key={j} aria-label={name} className="size-6">
                  <Svg box={24} size="size-6">{gh[name]}</Svg>
                </button>
              ) : null
            )}
          </div>
        ))}
      </div>
      <h3 className="flex h-[14px] items-center bg-[#1e1e1e] text-[10px] leading-[14px] whitespace-nowrap text-white">
        <span className="flex-1 text-center">{panel.title}</span>
        {panel.more && <Plus className="mr-[2px] size-2" strokeWidth={3} />}
      </h3>
    </section>
  );
}

const Can = ({ fill, dark, line = "#333" }) => (
  <g stroke={line}>
    <path d="M2 12L10 2c4-2 13 4 11 9l-8 10C9 24-1 17 2 12z" fill={fill} />
    <ellipse cx="15.5" cy="6.5" rx="5.5" ry="3.5" transform="rotate(42 15.5 6.5)" fill={dark} />
  </g>
);

const tool = {
  open: <><path d="M3 2h8l3 3h7v9H3z" fill="#f4f4f4" stroke="#555" /><path d="M1 12l8-3 3-2h10v16H1z" fill="#6cbf3a" stroke="#2f7a12" /></>,
  save: <><path d="M1 1h22v22H3l-2-2z" fill="#1d5fb8" stroke="#10305e" /><path d="M5 1h14v10H5z" fill="#e6edf5" /><path d="M6 4h12M6 7h12" stroke="#8aa" /><path d="M6 15h12v8H6z" fill="#9fb4cc" /><path d="M8 16h4v6H8z" fill="#123" /></>,
  extents: <><path d="M2 8V2h6M16 2h6v6M22 16v6h-6M8 22H2v-6" stroke="#111" strokeWidth="4" /><path d="M10 10l4 4M14 10l-4 4" stroke="#111" strokeWidth="1.5" /></>,
  eye: <><path d="M1 12C6 4 18 4 23 12 18 20 6 20 1 12z" fill="#eef5fa" stroke="#222" strokeWidth="1.4" /><circle cx="12" cy="12" r="6" fill="#3fa0dc" stroke="#134a74" /><circle cx="12" cy="12" r="2.8" fill="#111" /></>,
  sketch: <><path d="M1 13c6-3 6 1 3 4-4 4-2 7 3 5l3-1" stroke="#222" strokeWidth="2" /><path d="M9 19l2-7 9-10c3 1 4 5 3 7l-8 9z" fill="#d8261c" stroke="#7a0f0a" /><path d="M9 19l2-7 4 6z" fill="#f0c9a0" stroke="#333" /><path d="M14 11l7-7" stroke="#ffa69e" strokeWidth="2" /></>,
  plane: <><path d="M1 3h22v20H1z" fill="#2f8af0" stroke="#1b4f9c" /><path d="M1 15h22M9 3v20" stroke="#fff" /><path d="M6 12h6v6H6z" stroke="#fff" strokeWidth="1.4" /><path d="M15 1h4v10h-4V4" stroke="#111" strokeWidth="1.5" /></>,
  widget: gh.toaster,
  off: <><path d="M5 10l5-8c3-2 9 1 10 4l-4 8z" fill="#ddd" stroke="#777" /><ellipse cx="15" cy="5" rx="4" ry="3" fill="#f5f5f5" stroke="#777" /><path d="M3 17c4-6 14-6 18 0-4 6-14 6-18 0z" fill="#2d2d2d" /></>,
  wire: <><Can fill="#f4f4f4" dark="#fff" /><ellipse cx="8" cy="16" rx="5" ry="3.5" transform="rotate(42 8 16)" stroke="#444" /></>,
  shaded: <><Can fill="#b01212" dark="#7c0808" line="#4a0606" /><path d="M6 12l5-6" stroke="#e86a5a" strokeWidth="2" /></>,
  selected: <><Can fill="#e4e4e4" dark="#4fae2a" line="#666" /><path d="M7 6l3-4c4-2 13 4 11 9l-3 5z" fill="#3c9a1a" stroke="#1d5c08" /><ellipse cx="15.5" cy="6.5" rx="5" ry="3" transform="rotate(42 15.5 6.5)" fill="#7fd04e" /><path d="M2 3l18 19" stroke="#111" strokeWidth="1.5" /></>,
  half: <><circle cx="12" cy="12" r="10" fill="#e2e2e2" stroke="#777" /><path d="M12 2a10 10 0 000 20z" fill="#f0932b" stroke="#a2400c" /></>,
  mesh: <><path d="M8 3l7-1 5 4 2 6-3 7-6 3-7-2-4-6 1-7z" fill="#5eb0ee" stroke="#17436e" strokeWidth="1.3" /><circle cx="10" cy="9" r="4" fill="#c5e4fb" opacity=".8" /></>,
};

const ToolButton = ({ name, on }) => (
  <button
    aria-label={name}
    className={`flex size-7 items-center justify-center ${on ? "border border-[#2376c4] bg-[#d3e6f7]" : ""}`}
  >
    <Svg box={24} size="size-[22px]">{tool[name]}</Svg>
  </button>
);

const BlackCaret = () => (
  <svg viewBox="0 0 6 4" className="h-1 w-[6px] shrink-0" aria-hidden="true">
    <path d="M0 0h6L3 4z" fill="#111" />
  </svg>
);

const purpleFill = "bg-[linear-gradient(#ececf2,#c2c2cc_32%,#a8a7b9_32%,#8f8da3)]";
const purple = `border-2 border-[#2a2a2e] rounded-[5px] ${purpleFill}`;
const plain =
  "border-2 border-[#3a3a3a] rounded-[5px] bg-[linear-gradient(#fbfbfb,#e9e9e9_20%,#dadada_20%,#c8c8ca)]";

const ports = [
  [373, 88], [431, 89], [650, 89], [45, 247], [128, 247], [193, 250],
  [277, 250], [729, 251], [729, 282], [957, 267], [726, 410], [945, 410],
];

function Canvas() {
  const [value, setValue] = useState(150);

  return (
    <div className="relative mx-px h-[440px] overflow-hidden bg-[#d4d1c8] text-[17px] text-[#111]">
      {/* grid and wires */}
      <svg className="absolute inset-0 h-full w-full" fill="none" aria-hidden="true">
        <path
          d="M113.500 0v440M357.500 0v440M601.500 0v440M845.500 0v440M0 27.500h1018M0 109.500h1018M0 190.500h1018M0 271.500h1018M0 353.500h1018M0 434.500h1018"
          stroke="#b7b5b0"
        />
        <g stroke="#55534f" strokeWidth="4">
          <path d="M373 88C395 88 410 90 431 90" />
          <path d="M128 247C150 247 170 250 193 250" />
          <path d="M277 250.500H729" strokeWidth="5" />
          <path d="M655 89C780 89 596 282 725 282" />
          <path d="M945 410C975 410 985 395 1018 381" />
          <path d="M957 267L1018 265" stroke="#1d1d1d" strokeWidth="5" />
        </g>
        {ports.map(([x, y]) => (
          <circle key={`${x}-${y}`} cx={x} cy={y} r="6" fill="#fff" stroke="#0b0b0b" strokeWidth="3" />
        ))}
      </svg>

      {/* number slider */}
      <div className="absolute top-[71px] left-[41px] flex h-[33px] w-[331px] overflow-hidden rounded-[5px] border-2 border-[#2a2a2e] bg-linear-to-b from-[#f6f6f6] to-[#cfcfd1]">
        <label
          htmlFor="number-slider"
          className={`flex w-[134px] items-center justify-center border-r-2 border-[#2a2a2e] ${purpleFill}`}
        >
          Number Slider
        </label>
        <div className="relative flex flex-1 items-center">
          <svg className="ml-[14px] h-[10px] w-[116px]" fill="none" stroke="#a9a9a9" aria-hidden="true">
            <path d="M0 6.500h116M.5 0v6M17.500 2v4M33.500 2v4M49.500 2v4M66.500 2v4M82.500 0v6M98.500 2v4M114.500 2v4" />
          </svg>
          <output htmlFor="number-slider" className="ml-[5px]">{value}</output>
          <input
            id="number-slider"
            type="range"
            min="0"
            max="150"
            value={value}
            onChange={(e) => setValue(Number(e.target.value))}
            className="absolute inset-y-0 right-[10px] left-[9px] appearance-none bg-transparent [&::-webkit-slider-thumb]:size-[10px] [&::-webkit-slider-thumb]:rotate-45 [&::-webkit-slider-thumb]:appearance-none [&::-webkit-slider-thumb]:border-2 [&::-webkit-slider-thumb]:border-black [&::-webkit-slider-thumb]:bg-white"
          />
        </div>
      </div>

      {/* unit z */}
      <div className={`absolute top-[66px] left-[431px] flex h-[47px] w-[220px] items-center justify-between pr-[15px] pl-[10px] ${purple}`}>
        <span>Factor</span>
        <svg viewBox="0 0 28 28" className="size-7" fill="none" aria-hidden="true">
          <path d="M5 22L11 9" stroke="#111" strokeWidth="3" />
          <path d="M14 1l2 11-9-3z" fill="#111" />
          <circle cx="4" cy="24" r="2.5" fill="#fff" stroke="#111" strokeWidth="1.5" />
          <path d="M15 12h12v3l-8 10h5l2-3h2v6H14v-3l8-10h-4l-1 3h-2z" fill="#333" />
        </svg>
        <span>Unit vector</span>
      </div>

      {/* curve param */}
      <div className={`absolute top-[227px] left-[45px] h-10 w-[83px] ${purple}`}>
        <svg viewBox="0 0 79 36" className="h-9 w-[79px]" fill="none" aria-hidden="true">
          <path d="M22 35V15C23-4 53-4 53 15" stroke="#6d6d78" strokeWidth="2" />
          <path d="M20 13h4v4h-4zM51 13h4v4h-4zM20 31h4v4h-4z" fill="#fff" stroke="#3f9af5" strokeWidth="1.5" />
        </svg>
      </div>

      {/* geometry param */}
      <div className={`absolute top-[230px] left-[193px] flex h-10 w-[84px] items-center justify-center ${plain}`}>
        <svg viewBox="0 0 38 36" className="h-9 w-[38px]" fill="none" aria-hidden="true">
          <path d="M9 1h20l9 17-9 17H9L0 18z" fill="#1c1c1c" />
          <g stroke="#e4e4e4" transform="rotate(-48 19 18)">
            <ellipse cx="19" cy="18" rx="13" ry="9" strokeWidth="3" />
            <ellipse cx="18" cy="18" rx="7" ry="4" strokeWidth="2" />
            <path d="M15 18h6" strokeWidth="2" />
          </g>
        </svg>
      </div>

      {/* extrude */}
      <div className={`absolute top-[230px] left-[729px] flex h-[73px] w-[228px] items-center justify-between pr-[16px] pl-[10px] ${plain}`}>
        <div className="flex flex-col text-right leading-8">
          <span>Base</span>
          <span>Direction</span>
        </div>
        <svg viewBox="0 0 28 32" className="h-8 w-7" fill="none" aria-hidden="true">
          <path d="M1 4c4-5 9-3 13 0 4-3 9-5 13 0v26l-6-3-7 3-7-3-6 3z" fill="#f9a01b" stroke="#b5330c" strokeWidth="1.5" />
          <path d="M1 30l6-3 7 3 7-3 6 3" stroke="#111" strokeWidth="2.5" />
          <path d="M14 28V13" stroke="#111" strokeWidth="3" />
          <path d="M9 15l5-8 5 8z" fill="#111" />
        </svg>
        <span>Extrusion</span>
      </div>

      {/* unit x */}
      <div className={`absolute top-[387px] left-[726px] flex h-[47px] w-[219px] items-center justify-between pr-[15px] pl-[10px] ${purple}`}>
        <span>Factor</span>
        <svg viewBox="0 0 28 28" className="size-7" fill="none" aria-hidden="true">
          <path d="M7 0h6v2h-1l3 4 2-4h-1V0h5v2h-1l-4 6 4 6h2v2h-7v-2h1l-3-4-3 4h2v2H6v-2h2l4-6-4-6H7z" fill="#333" />
          <path d="M3 24h17" stroke="#111" strokeWidth="3" />
          <path d="M18 19l9 5-9 5z" fill="#111" />
          <circle cx="3" cy="24" r="2.2" fill="#fff" stroke="#111" strokeWidth="1.5" />
        </svg>
        <span>Unit vector</span>
      </div>

      {/* compass */}
      <svg viewBox="-28 -28 56 56" className="absolute top-[380px] left-[959px] size-14" aria-hidden="true">
        <path d="M-28 -14l9 -3 5 4-4 6zM14 -16l6 4 2 8-4 2z" fill="#111" />
        <circle r="20" fill="#fff" stroke="#333" strokeWidth="1.5" />
        <circle r="17" fill="#d2d2d0" />
        <circle r="8" fill="#e2e2e0" />
        <path d="M5 -18l5 1-3 5zM18 5l-1 5-4-3zM-5 18l-5-1 3-5zM-18 -5l1-5 4 3z" fill="#fff" />
      </svg>

      {/* markov corner button */}
      <button
        aria-label="wire"
        className="absolute bottom-[2px] left-0 flex h-7 w-[35px] items-center border-2 border-l-0 border-black bg-linear-to-b from-[#f0f0f0] to-[#8f8f8f] pl-[2px]"
      >
        <Svg box={24} size="size-6">
          <path d="M5 18l6-6-3-2 10-3-3 10-3-3-5 6z" fill="#f8a81c" stroke="#222" />
          <circle cx="4" cy="20" r="2" fill="#fff" stroke="#111" strokeWidth="1.5" />
          <circle cx="19" cy="4" r="2" fill="#fff" stroke="#111" strokeWidth="1.5" />
        </Svg>
      </button>

      {/* mouse pointer */}
      <svg viewBox="0 0 12 18" className="absolute top-[87px] left-[347px] h-[18px] w-3" aria-hidden="true">
        <path d="M1 1v14l3-3 2 5 2-1-2-5h5z" fill="#fff" stroke="#222" />
      </svg>
    </div>
  );
}

function GrasshopperWindow() {
  return (
    <div className="absolute top-[140px] left-[697px] flex w-[1022px] flex-col border border-[#4d4d4d] bg-[#f0f0f0] font-[family-name:'Noto_Sans',sans-serif] text-[#111] shadow-[0_3px_14px_rgba(0,0,0,0.35)]">
      <header className="flex h-[31px] items-center bg-white">
        <h1 className="flex-1 pl-[7px] font-[family-name:Roboto,sans-serif] text-[12px]">
          Grasshopper - LearningGrasshopper*
        </h1>
        <button aria-label="Minimize" className="flex w-[45px] justify-center">
          <Minus className="size-3" strokeWidth={2} />
        </button>
        <button aria-label="Maximize" className="flex w-[46px] justify-center">
          <span className="size-[10px] border border-black" />
        </button>
        <button aria-label="Close" className="flex w-[46px] justify-center">
          <X className="size-4" strokeWidth={1.5} />
        </button>
      </header>

      <nav className="flex h-[27px] items-center bg-linear-to-r from-[#f0f0f0] to-[#fdfdfd] pl-[3px] font-[family-name:Roboto,sans-serif] text-[12px]">
        {["File", "Edit", "View", "Display", "Solution", "Help"].map((m) => (
          <button key={m} className="px-[9px]">{m}</button>
        ))}
        <span className="ml-auto pr-[9px]">LearningGrasshopper*</span>
      </nav>

      <div className="flex h-[23px] items-end text-[11px] text-[#6f6f6f]">
        {ghTabs.map(([name, width]) => (
          <button key={name} className={`h-[22px] shrink-0 text-center ${width}`}>{name}</button>
        ))}
        <button className="z-10 -mb-px h-6 w-[65px] rounded-t-[5px] border border-b-0 border-[#8b8b8b] bg-linear-to-b from-white to-[#e2e2e2] text-[#111]">
          BricsCAD
        </button>
      </div>

      <div className="flex h-[87px] items-start gap-[3px] rounded-t-[4px] border-t border-[#8b8b8b] bg-linear-to-b from-[#d9d9d9] to-[#efefef] pt-px pl-[2px]">
        {ghPanels.map((p) => (
          <GhPanel key={p.title} panel={p} />
        ))}
      </div>

      <div className="flex h-8 items-center border-t-2 border-[#6e6e6e] bg-linear-to-b from-white to-[#f3f3f3]">
        <div className="flex gap-[3px]">
          <ToolButton name="open" />
          <ToolButton name="save" />
        </div>
        <span className="mx-[4px] h-5 w-px bg-[#c4c4c4]" />
        <div className="relative ml-px flex items-center">
          <select
            aria-label="Zoom"
            className="h-[23px] w-[136px] appearance-none border border-[#777] bg-white pl-[3px] font-[family-name:Roboto,sans-serif] text-[12px]"
          >
            <option>163%</option>
            <option>100%</option>
          </select>
          <ChevronDown className="pointer-events-none absolute right-[3px] size-3" strokeWidth={1.5} />
        </div>
        <div className="ml-[3px] flex items-center gap-[3px]">
          <ToolButton name="extents" />
          <BlackCaret />
          <ToolButton name="eye" />
          <BlackCaret />
        </div>
        <div className="ml-[4px] flex items-center">
          <ToolButton name="sketch" />
          <ToolButton name="plane" />
          <ToolButton name="widget" />
        </div>
        <div className="mr-[4px] ml-auto flex items-center">
          <div className="flex gap-px">
            <ToolButton name="off" />
            <ToolButton name="wire" />
            <ToolButton name="shaded" on />
          </div>
          <span className="mx-[7px] h-5 w-px bg-[#c4c4c4]" />
          <ToolButton name="selected" />
          <ToolButton name="half" />
          <span className="mx-[3px] h-5 w-px bg-[#c4c4c4]" />
          <ToolButton name="mesh" />
          <BlackCaret />
        </div>
      </div>

      <Canvas />

      <footer className="flex h-[22px] items-center border-t border-white px-[3px] font-[family-name:Roboto,sans-serif] text-[12px]">
        <Svg box={16} size="size-4">
          <circle cx="8" cy="8" r="7.5" fill="#1464c8" stroke="#0a2f80" />
          <path d="M6.500 3h3v6h-3zM6.500 11h3v2h-3z" fill="#1464c8" stroke="#fff" />
        </Svg>
        <span className="ml-[4px]">Autosave complete (7 seconds ago)</span>
        <span className="mr-[21px] ml-auto text-[11px] text-[#666]">1.0.0007</span>
        <svg viewBox="0 0 10 10" className="size-[10px] self-end" fill="#a5a5a5" aria-hidden="true">
          <path d="M8 0h2v2H8zM4 4h2v2H4zM8 4h2v2H8zM0 8h2v2H0zM4 8h2v2H4zM8 8h2v2H8z" />
        </svg>
      </footer>
    </div>
  );
}

/* ---------- status bar ---------- */

// [label, width, state]
const status = [
  ["Standard", "w-[53px]", "text"],
  ["ISO-25", "w-[43px]", "text"],
  ["BIM", "w-[28px]", "text"],
  ["SNAP", "w-[36px]", "off"],
  ["GRID", "w-[36px]", "off"],
  ["ORTHO", "w-[45px]", "off"],
  ["POLAR", "w-[42px]", "off"],
  ["ESNAP", "w-[41px]", "off"],
  ["STRACK", "w-[48px]", "on"],
  ["LWT", "w-[30px]", "off"],
  ["TILE", "w-[30px]", "text"],
  ["1:1", "w-[24px]", "text"],
  ["DUCS", "w-[36px]", "on"],
  ["DYN", "w-[29px]", "on"],
  ["QUAD", "w-[38px]", "on"],
  ["RT", "w-[22px]", "on"],
  ["HKA", "w-[29px]", "on"],
  ["LOCKUI", "w-[46px]", "off"],
  ["None", "w-[34px]", "text"],
];

const stateClass = {
  text: "text-[#e8e8e8]",
  off: "text-[#4b4e52]",
  on: "bg-[#4a5160] text-white",
};

const layoutNav = [
  ["First", "M2 1v10M10 1v10L4 6z"],
  ["Previous", "M9 1v10L3 6z"],
  ["Next", "M3 1v10l6-5z"],
  ["Last", "M2 1v10l6-5zM10 1v10"],
  ["List", "M1 2h10v8H1zM3 5h6M3 7h6"],
];

export default function App() {
  const [layout, setLayout] = useState("Model");

  return (
    <div className="flex min-h-screen flex-col overflow-hidden bg-[#2d2e31] font-[family-name:'DejaVu_Sans_Condensed','Noto_Sans',sans-serif] text-[#dcdcdc]">
      {/* TITLE */}
      <header className="flex h-[23px] items-center bg-white pl-[2px] font-[family-name:Roboto,sans-serif] text-[#8b8b8b]">
        <Logo size="size-4" />
        <span className="ml-[5px] flex-1 text-[12px]">
          BricsCAD Ultimate (NOT FOR RESALE License) - [LearningGrasshopper.dwg]
        </span>
        <button aria-label="Minimize" className="flex w-[45px] justify-center">
          <Minus className="size-3" strokeWidth={2} />
        </button>
        <button aria-label="Restore" className="flex w-[46px] justify-center">
          <svg viewBox="0 0 11 11" className="size-[11px]" fill="none" stroke="currentColor" aria-hidden="true">
            <path d="M.5 2.500h8v8h-8zM2.500 2.500v-2h8v8h-2" />
          </svg>
        </button>
        <button aria-label="Close" className="mr-[2px] flex w-[46px] justify-center">
          <X className="size-4" strokeWidth={1.5} />
        </button>
      </header>

      {/* QUICK ACCESS */}
      <div className="flex h-[29px] items-center pl-[6px]">
        <span className="mr-[8px] h-[18px] w-[3px] border-l-2 border-dotted border-[#cfcfcf]" />
        {["new", "open", "save", "saveAs"].map((n) => <QuickButton key={n} name={n} />)}
        <QuickSep />
        {["preview", "print", "plot"].map((n) => <QuickButton key={n} name={n} />)}
        <QuickSep />
        {["undo", "redo"].map((n) => <QuickButton key={n} name={n} />)}
        <QuickSep />
        <div className="relative mr-[4px] ml-px flex h-[22px] w-[300px] items-center gap-[7px] border border-[#1b1c1e] bg-[#454b55] pl-px">
          <Svg box={16} size="size-4"><Bulb t="translate(2 0) scale(1.1)" /></Svg>
          <Svg box={16} size="size-4">
            <circle cx="8" cy="8" r="4.5" fill="#ffc928" />
            <path d="M8 0v16M0 8h16M2 2l12 12M14 2L2 14" stroke="#ffc928" />
          </Svg>
          <Svg box={16} size="size-4">
            <path d="M1 7V4c0-4 5-4 5 0v2" stroke="#999" strokeWidth="1.5" />
            <path d="M4 6h11v9H4z" fill="#e9b44a" />
            <path d="M4 9h11M4 12h11" stroke="#8a6110" />
          </Svg>
          <Svg box={16} size="size-4"><Printer /></Svg>
          <span className="size-[18px] border border-black bg-[#e6e6e6]" />
          <select aria-label="Layer" className="h-full flex-1 appearance-none text-[12px] outline-none">
            <option>0</option>
          </select>
          <ChevronDown className="pointer-events-none absolute right-[2px] size-3" />
        </div>
        {["brush", "dropper", "pick", "hide", "isolate", "show"].map((n) => <QuickButton key={n} name={n} />)}
        <QuickSep />
        {["edges", "faces", "bounds", "solid"].map((n) => <QuickButton key={n} name={n} />)}
        <QuickSep />
        {["props", "eraser", "gears", "note", "expand"].map((n) => <QuickButton key={n} name={n} />)}
        <QuickSep />
        <QuickButton name="help" />
      </div>

      {/* RIBBON TABS */}
      <nav className="flex h-[26px] items-center bg-[#18191b] text-[13px]">
        <div className="flex h-full w-9 justify-end bg-[#2d2e31] pr-[2px]">
          <button aria-label="Application menu"><Logo size="size-[26px]" /></button>
        </div>
        <button className="mr-[4px] h-full w-[73px] bg-[#2d2e31]">Home</button>
        {menuTabs.map(([name, width]) => (
          <button key={name} className={`h-full shrink-0 whitespace-nowrap ${width}`}>{name}</button>
        ))}
      </nav>

      {/* RIBBON */}
      <div className="flex h-[89px]">
        {groups.map((g) => (
          <RibbonGroup key={g.title} group={g} />
        ))}
      </div>

      {/* WORK AREA */}
      <main className="flex flex-1">
        <SideBar names={["settings", "structure", "profile"]} />
        <div className="flex min-w-0 flex-1 flex-col">
          <div className="flex h-[17px] text-[11px]">
            <button className="flex w-[70px] items-center justify-between border-r-2 border-[#18191b] pr-1 pl-[13px] text-[#b5b5b5]">
              Start <X className="size-3" strokeWidth={3} />
            </button>
            <button className="flex w-[168px] items-center justify-between bg-[#434a55] pr-[6px] pl-[11px] font-[family-name:'Liberation_Sans',sans-serif] text-[12px] font-bold text-white">
              LearningGrasshopper* <X className="size-3 text-[#b5b5b5]" strokeWidth={3} />
            </button>
            <button aria-label="New tab" className="flex w-[27px] items-center justify-center border-r border-[#18191b]">
              <Plus className="size-3" strokeWidth={2} />
            </button>
          </div>

          <div className="relative flex-1 overflow-hidden border-t border-[#8f8f8f] bg-[#828282]">
            <ModelView />
            <LookFrom />
            <GrasshopperWindow />
          </div>

          <div className="flex h-[18px] items-center border-b border-[#6b6d70] text-[11px]">
            {layoutNav.map(([name, d]) => (
              <button key={name} aria-label={name} className="flex h-4 w-[17px] items-center justify-center border-l border-[#8b8b8b] bg-[#1f2022]">
                <svg viewBox="0 0 12 12" className="size-[9px]" fill="#fff" stroke="#fff" aria-hidden="true">
                  <path d={d} fillOpacity={name === "List" ? 0 : 1} />
                </svg>
              </button>
            ))}
            <div className="flex h-full">
              {["Model", "Layout1", "Layout2"].map((name) => (
                <button
                  key={name}
                  onClick={() => setLayout(name)}
                  className={
                    layout === name
                      ? "mx-px w-[40px] bg-[#434a55] font-bold text-white"
                      : "w-[51px] text-center text-[#c4c4c4]"
                  }
                >
                  {name}
                </button>
              ))}
              <button aria-label="New layout" className="flex w-4 items-center justify-center border-r border-[#18191b]">
                <Plus className="size-[10px]" />
              </button>
            </div>
          </div>
        </div>
        <SideBar
          names={["tips", "home", "balloon", "propagate", "materials", "layers", "paint", "component", "warning", "blocks", "clip", "cloud"]}
        />
      </main>

      {/* STATUS */}
      <footer className="flex h-[18px] items-center bg-[#18191b] text-[11px]">
        <span className="flex-1 pl-[3px] font-bold">:</span>
        <span className="w-[146px] border-l border-[#d6d6d6] pr-[6px] text-right leading-[15px]">
          173.17, -85.45, 0
        </span>
        {status.map(([label, width, state]) => (
          <button
            key={label}
            className={`h-[15px] shrink-0 border-l border-[#d6d6d6] px-[2px] text-center leading-[15px] whitespace-nowrap ${width}`}
          >
            <span className={`block ${stateClass[state]}`}>{label}</span>
          </button>
        ))}
        <span className="flex h-[15px] w-[61px] items-center justify-between border-l border-[#d6d6d6] pl-1">
          <Caret />
          <svg viewBox="0 0 10 10" className="size-[10px]" fill="#9a9a9a" aria-hidden="true">
            <path d="M8 0h2v2H8zM4 4h2v2H4zM8 4h2v2H8zM0 8h2v2H0zM4 8h2v2H4zM8 8h2v2H8z" />
          </svg>
        </span>
      </footer>
    </div>
  );
}
